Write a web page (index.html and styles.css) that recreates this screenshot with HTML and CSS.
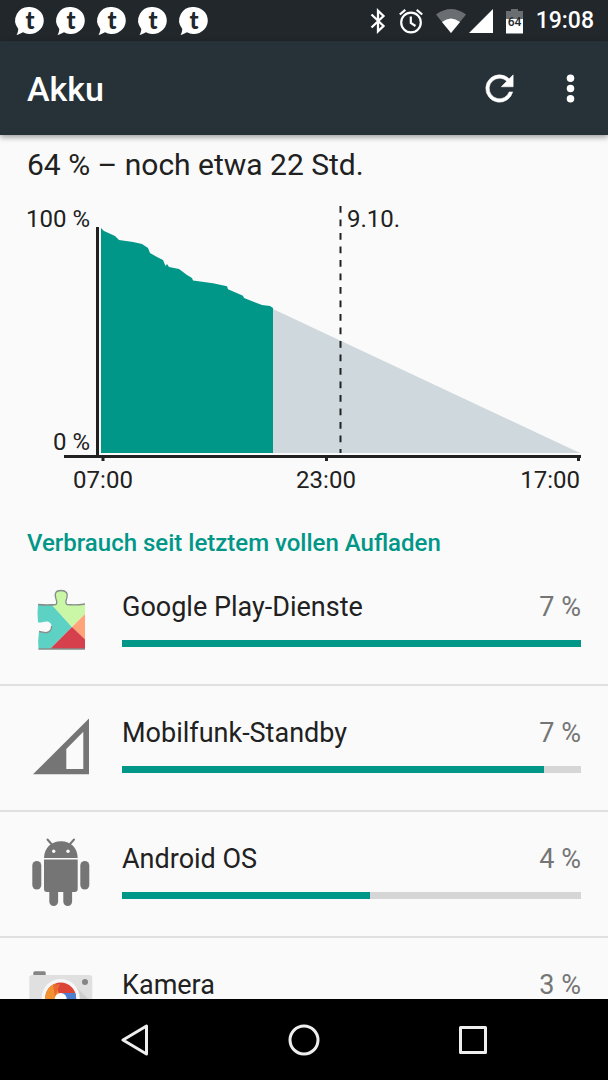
FILE: index.html
```html
<!DOCTYPE html>
<html lang="de">
<head>
<meta charset="utf-8">
<meta name="viewport" content="width=device-width, initial-scale=1">
<title>Akku</title>
<link rel="stylesheet" href="styles.css">
</head>
<body>
<svg class="defs" aria-hidden="true">
  <symbol id="bubble" class="bubble" viewBox="0 0 28 28">
    <path fill="#fff" d="M14 0a14 13.500 0 1 1-7 25.300C5 26 3 27.500.5 28c1-1.500 1.500-3 1.800-6A13.500 13.500 0 0 1 14 0z"/>
    <text class="bubble-letter" x="14" y="22" text-anchor="middle">t</text>
  </symbol>
</svg>
<div class="screen">
  <div class="status-bar">
    <div class="notifications">
      <svg class="note"><use href="#bubble"/></svg>
      <svg class="note"><use href="#bubble"/></svg>
      <svg class="note"><use href="#bubble"/></svg>
      <svg class="note"><use href="#bubble"/></svg>
      <svg class="note"><use href="#bubble"/></svg>
    </div>
    <div class="system">
      <svg width="16" height="26" viewBox="0 0 16 26" fill="none" stroke="#fff" stroke-width="2.300"><path d="M1.500 6.500 13.500 18 8 23.300V2.700L13.500 8 1.500 19.500"/></svg>
      <svg width="24" height="26" viewBox="0 0 24 26" fill="none" stroke="#fff" stroke-width="2.200"><circle cx="12" cy="14.500" r="9.800"/><path d="M11.800 8.500v6.500l4.700 3M.8 6.500 6.300 1.800M23.200 6.500 17.700 1.800"/></svg>
      <div class="network">
        <svg width="30" height="26" viewBox="0 0 30 26"><path fill="#6b6e70" d="M0 6.500Q15-4.500 30 6.500L15 25z"/><path fill="#fff" d="M6 14Q15 7 24 14L15 25z"/></svg>
        <svg width="24" height="26" viewBox="0 0 24 26"><path fill="#fff" d="M24 1v24H0z"/></svg>
      </div>
      <svg width="17" height="26" viewBox="0 0 17 26"><path fill="#6b6e70" d="M5 1h7v2h5v8H0V3h5z"/><path fill="#fff" d="M0 11h17v14.500H0z"/><text class="battery-level" x="8.500" y="18" text-anchor="middle">64</text></svg>
      <time class="clock">19:08</time>
    </div>
  </div>
  <header class="app-bar">
    <h1 class="app-title">Akku</h1>
    <button class="action" type="button" aria-label="Aktualisieren">
      <svg width="41" height="41" viewBox="0 0 24 24"><path fill="#fff" stroke="#fff" stroke-width=".3" d="M17.650 6.350A7.950 7.950 0 0 0 12 4a8 8 0 1 0 7.730 10h-2.080A6 6 0 1 1 12 6c1.660 0 3.140.69 4.220 1.780L13 11h7V4z"/></svg>
    </button>
    <button class="action" type="button" aria-label="Weitere Optionen">
      <svg width="41" height="41" viewBox="0 0 24 24" fill="#fff"><circle cx="12" cy="6" r="2.200"/><circle cx="12" cy="12" r="2.200"/><circle cx="12" cy="18" r="2.200"/></svg>
    </button>
  </header>
  <main class="content">
    <p class="summary">64 % – noch etwa 22 Std.</p>
    <svg class="chart" viewBox="0 182 608 318" role="img" aria-label="Akkuverlauf">
      <path fill="#cfd8dc" d="M273 309 580 453H273z"/>
      <path fill="#009688" d="M101 228l3 3 11 5 4 4 14 2 9 2 6 4 2 5 7 4 6 3 2.500 6 1.500-2 2 3 10 2 8 6 5 3 1 2.500 20 2.700 14 3 1 3 15 6.500 1 2.300 18 7 8 1 3 2V453H101z"/>
      <path fill="none" stroke="#212121" stroke-width="3" d="M97.500 227V456M64 456.500H581M103 458v3M326.500 458v3M578.500 458v3"/>
      <path fill="none" stroke="#212121" stroke-width="2" stroke-dasharray="6.750" d="M340.500 206V453"/>
      <g class="chart-label">
        <text x="90" y="227" text-anchor="end">100 %</text>
        <text x="90" y="450" text-anchor="end">0 %</text>
        <text x="347" y="227">9.10.</text>
        <text x="103" y="488" text-anchor="middle">07:00</text>
        <text x="326" y="488" text-anchor="middle">23:00</text>
        <text x="580" y="488" text-anchor="end">17:00</text>
      </g>
    </svg>
    <h2 class="category">Verbrauch seit letztem vollen Aufladen</h2>
    <ul class="usage-list">
      <li class="usage">
        <svg class="app-icon" viewBox="0 0 68 68">
          <clipPath id="piece"><path d="M11 18.500Q20 19.500 29 18.500 30.500 17 29 13C27 7 29 4.500 34 4.500S41.500 7 39.500 13Q38 17 40 18.500 49 19.500 58 18V63H11.500Q10.500 55 12 45.500C15 45.500 17 47 20 46.500 26 45.500 26.500 37 20.500 35.500 17 35 15 37 11 36.500Q10 27 11 18.500z"/></clipPath>
          <g clip-path="url(#piece)"><path fill="#5dd1c3" d="M8 0h16.500v18.300L45 41 23 63H8z"/><path fill="#c9f7a6" d="M24.500 0H60v26L45 41 24.500 18.500z"/><path fill="#ffa478" d="M45 41 58 28v26z"/><path fill="#d63f4c" d="M45 41 58 53.500V63H23z"/></g>
          <path fill="none" stroke="#858f8a" stroke-width="1.300" d="M11 18.500Q20 19.500 29 18.500 30.500 17 29 13C27 7 29 4.500 34 4.500S41.500 7 39.500 13Q38 17 40 18.500 49 19.500 58 18M12 45.500C15 45.500 17 47 20 46.500 23 46 25 43 24.500 40M11.500 63H58"/>
        </svg>
        <div class="usage-body">
          <label class="usage-name" for="u1">Google Play-Dienste</label><span class="usage-value">7 %</span>
          <progress class="bar" id="u1" max="100" value="100"></progress>
        </div>
      </li>
      <li class="usage">
        <svg class="app-icon" viewBox="0 0 68 68"><path fill="#757575" fill-rule="evenodd" d="M6 62.300 62 6.500v55.800zM39.300 37v20h17V19.700z"/></svg>
        <div class="usage-body">
          <label class="usage-name" for="u2">Mobilfunk-Standby</label><span class="usage-value">7 %</span>
          <progress class="bar" id="u2" max="100" value="92"></progress>
        </div>
      </li>
      <li class="usage">
        <svg class="app-icon" viewBox="0 0 68 68" fill="#757575">
          <path d="M17 20C17.500 10 24 3.300 34 3.300S50.500 10 50.700 20zM17 21.500h33.700V51q0 3-3 3H20q-3 0-3-3z"/>
          <rect x="5.300" y="23" width="9" height="28.500" rx="4.500"/><rect x="53.300" y="23" width="9" height="28.500" rx="4.500"/>
          <rect x="22.300" y="46" width="8.800" height="22" rx="4.400"/><rect x="36.300" y="46" width="8.800" height="22" rx="4.400"/>
          <path stroke="#757575" stroke-width="2" stroke-linecap="round" d="m20.500 1.500 4.800 5.500M47 1.500 42.200 7"/>
          <circle cx="26.700" cy="13.300" r="1.700" fill="#fafafa"/><circle cx="41" cy="13.300" r="1.700" fill="#fafafa"/>
        </svg>
        <div class="usage-body">
          <label class="usage-name" for="u3">Android OS</label><span class="usage-value">4 %</span>
          <progress class="bar" id="u3" max="100" value="54"></progress>
        </div>
      </li>
      <li class="usage">
        <svg class="app-icon" viewBox="0 0 68 68">
          <rect x="6.300" y="7.300" width="12.400" height="8" rx="1.500" fill="#858585"/>
          <rect x="2.300" y="11" width="63" height="48" rx="3" fill="#e0e0e0"/>
          <path fill="#cecece" d="M47 21 65.300 39V59H34z"/>
          <circle cx="58" cy="18" r="3" fill="#858585"/>
          <circle cx="33.700" cy="34" r="19" fill="#f7f7f7"/>
          <circle cx="33.700" cy="34" r="15.400" fill="#db4437"/>
          <path fill="#f29130" d="M33.700 34 28 19.700A15.400 15.400 0 0 0 26 47.300z"/>
          <path fill="#e86a32" d="M26 20.700 33 20 28 33z"/>
          <path fill="#4f7fd0" d="M33.700 29H48.300A15.400 15.400 0 0 1 34 49.400z"/>
          <circle cx="33.700" cy="35" r="6" fill="#fff"/>
        </svg>
        <div class="usage-body">
          <label class="usage-name" for="u4">Kamera</label><span class="usage-value">3 %</span>
          <progress class="bar" id="u4" max="100" value="42"></progress>
        </div>
      </li>
    </ul>
  </main>
  <nav class="nav-bar" aria-label="Systemnavigation">
    <button class="nav-button" type="button" aria-label="Zurück"><svg width="32" height="32" viewBox="0 0 32 32"><path d="M27.500 2v28L4 16z"/></svg></button>
    <button class="nav-button" type="button" aria-label="Startseite"><svg width="32" height="32" viewBox="0 0 32 32"><circle cx="16" cy="16" r="14"/></svg></button>
    <button class="nav-button" type="button" aria-label="Übersicht"><svg width="32" height="32" viewBox="0 0 32 32"><path d="M3.500 3.500h25v25h-25z"/></svg></button>
  </nav>
</div>
</body>
</html>
```
FILE: styles.css
```css
* {
  box-sizing: border-box;
}

body {
  margin: 0;
  background: #fafafa;
  color: #212121;
  font-family: Roboto, "Noto Sans", sans-serif;
}

button {
  padding: 0;
  border: 0;
  background: none;
}

svg {
  display: block;
}

.defs {
  position: absolute;
  width: 0;
  height: 0;
}

.screen {
  display: flex;
  flex-direction: column;
  height: 100vh;
}

.status-bar {
  display: flex;
  align-items: center;
  justify-content: space-between;
  flex: none;
  height: 41px;
  padding: 0 14px 0 16px;
  background: #21272b;
}

.notifications {
  display: flex;
  gap: 13px;
}

.note {
  width: 28px;
  height: 28px;
  overflow: visible;
}

.bubble {
  overflow: visible;
}

.bubble-letter {
  fill: #21272b;
  font: 900 24px Lato, sans-serif;
}

.system {
  display: flex;
  align-items: center;
  gap: 13px;
}

.network {
  display: flex;
  gap: 3px;
}

.battery-level {
  fill: #21272b;
  font-size: 12px;
  font-weight: 500;
}

.clock {
  color: #fff;
  font-size: 23px;
  font-weight: 500;
  line-height: 28px;
}

.app-bar {
  display: flex;
  align-items: center;
  flex: none;
  gap: 30px;
  height: 94px;
  padding: 0 17px 0 27px;
  background: #263238;
  box-shadow: 0 2px 6px rgba(0, 0, 0, 0.4);
  z-index: 1;
}

.app-title {
  flex: 1;
  margin: 0;
  padding-top: 1px;
  color: #fff;
  font-size: 34px;
  font-weight: 500;
  line-height: 40px;
}

.content {
  flex: 1;
  min-height: 0;
  padding-top: 12px;
  overflow: hidden;
}

.summary {
  margin: 0;
  padding: 0 27px;
  font-size: 30px;
  line-height: 35px;
}

.chart {
  width: 100%;
}

.chart-label {
  fill: #212121;
  font-size: 24px;
}

.category {
  margin: 0;
  padding: 26px 27px 0;
  color: #009688;
  font-size: 24px;
  font-weight: 500;
  line-height: 34px;
}

.usage-list {
  margin: 0;
  padding: 0;
  list-style: none;
}

.usage {
  display: flex;
  gap: 27px;
  padding: 26px 27px 30px;
  border-bottom: 2px solid #e0e0e0;
}

.app-icon {
  flex: none;
  width: 68px;
  height: 68px;
}

.usage-body {
  display: grid;
  grid-template-columns: 1fr auto;
  align-content: start;
  flex: 1;
  row-gap: 15px;
  padding-top: 3px;
  font-size: 27px;
  line-height: 36px;
}

.usage-value {
  color: #757575;
}

.bar {
  grid-column: 1 / -1;
  display: block;
  width: 100%;
  height: 7px;
  border: 0;
  background: #d6d6d6;
  appearance: none;
}

.bar::-webkit-progress-bar {
  background: #d6d6d6;
}

.bar::-webkit-progress-value {
  background: #009688;
}

.nav-bar {
  display: grid;
  grid-template-columns: repeat(3, 1fr);
  flex: none;
  height: 81px;
  padding: 0 50px;
  background: #000;
}

.nav-button {
  display: flex;
  align-items: center;
  justify-content: center;
  fill: none;
  stroke: #eee;
  stroke-width: 3px;
  stroke-linejoin: round;
}
```
